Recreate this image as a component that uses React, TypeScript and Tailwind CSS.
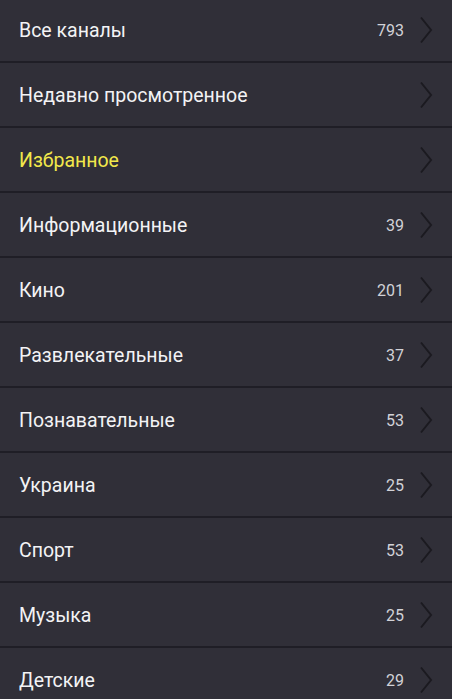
const categories = [
  { name: "Все каналы", count: 793 },
  { name: "Недавно просмотренное" },
  { name: "Избранное", highlight: true },
  { name: "Информационные", count: 39 },
  { name: "Кино", count: 201 },
  { name: "Развлекательные", count: 37 },
  { name: "Познавательные", count: 53 },
  { name: "Украина", count: 25 },
  { name: "Спорт", count: 53 },
  { name: "Музыка", count: 25 },
  { name: "Детские", count: 29 },
]

export default function App() {
  return (
    <main
      className="h-screen bg-[#302f38] overflow-hidden"
      style={{ fontFamily: "Roboto, 'Noto Sans', sans-serif" }}
    >
      <div className="-mt-[2px]">
        {categories.map((cat) => (
          <div
            key={cat.name}
            className="h-[65px] flex items-center pl-[19px] pr-[19px] border-b-2 border-[#1f1e26]"
          >
            <span
              className={
                "flex-1 pt-[3px] text-[19.5px] " +
                (cat.highlight ? "text-[#f2e84b]" : "text-[#f3f3f5]")
              }
            >
              {cat.name}
            </span>
            {cat.count !== undefined && (
              <span className="pt-[2px] text-[16px] text-[#d2d2d7] mr-[15px]">{cat.count}</span>
            )}
            <svg width="14" height="28" viewBox="0 0 14 28" fill="none">
              <path d="M2 1.5 L12 14 L2 26.5" stroke="#1b1a20" strokeWidth="2" />
            </svg>
          </div>
        ))}
      </div>
    </main>
  )
}
